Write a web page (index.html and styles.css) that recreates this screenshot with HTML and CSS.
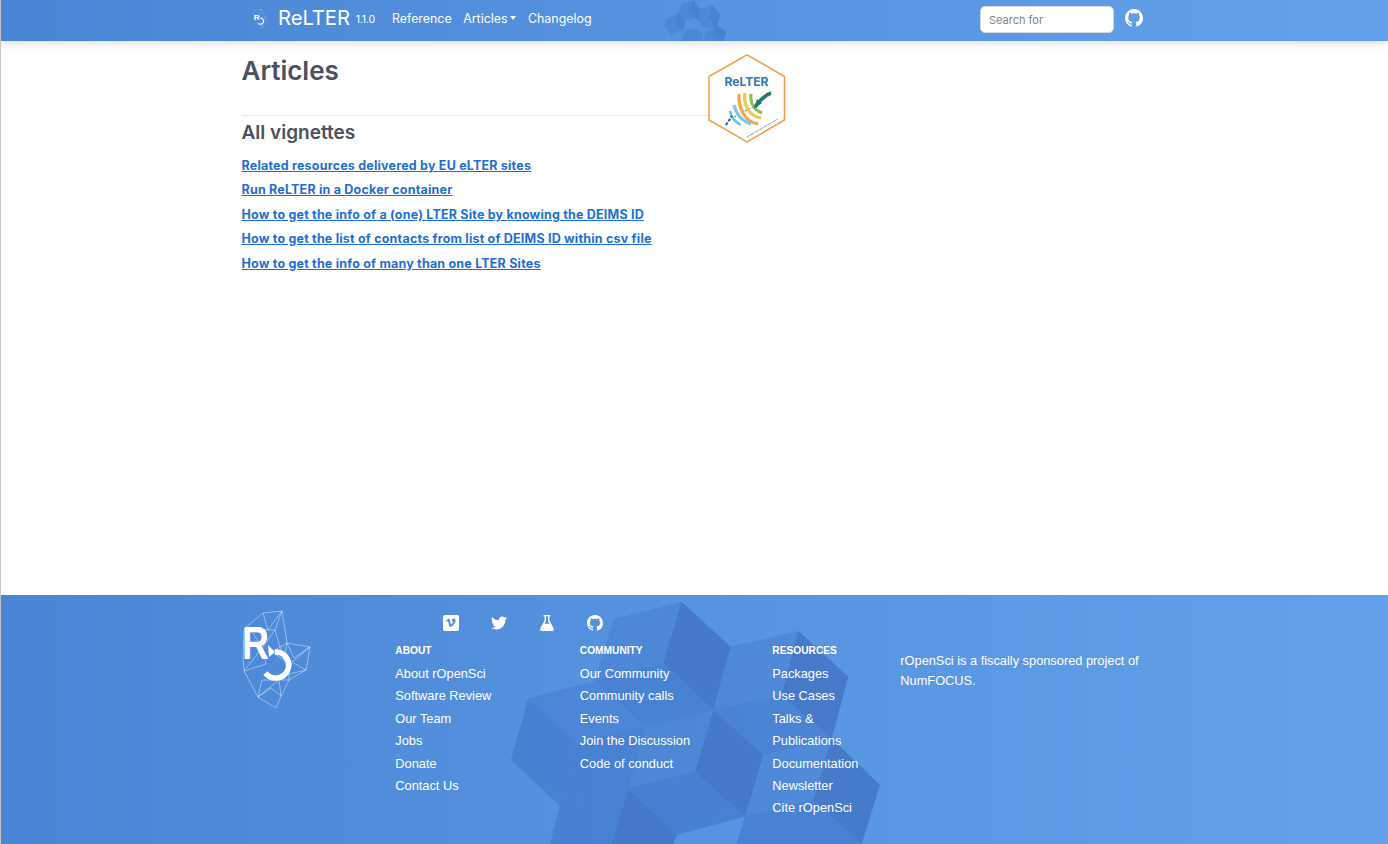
FILE: index.html
```html
<!DOCTYPE html>
<html lang="en">
<head>
<meta charset="utf-8">
<title>Articles • ReLTER</title>
<link rel="stylesheet" href="styles.css">
</head>
<body>
<header class="navbar">
  <svg class="nav-cubes" viewBox="0 0 240 126" aria-hidden="true">
    <polygon class="c1" points="80,12 115,0 135,28 125,55 90,62 70,40"/>
    <polygon class="c2" points="115,0 135,28 125,55 100,35"/>
    <polygon class="c1" points="30,60 70,40 90,62 85,90 50,105 30,80"/>
    <polygon class="c2" points="70,40 90,62 85,90 62,72"/>
    <polygon class="c1" points="130,28 170,15 197,45 185,80 145,85 125,55"/>
    <polygon class="c2" points="170,15 197,45 185,80 160,55"/>
    <polygon class="c1" points="78,126 90,92 125,85 145,105 140,126"/>
    <polygon class="c1" points="145,126 152,92 185,75 213,95 205,126"/>
    <polygon class="c2" points="185,75 213,95 205,126 178,105"/>
  </svg>
  <div class="nav-inner">
    <a class="nav-logo" href="#">
      <svg viewBox="0 0 20 24" class="nav-logo-svg" aria-hidden="true">
        <g class="wire-small"><polyline points="3,3 11,1 16,9 18,15 12,22 7,18 4,12 3,3"/><polyline points="11,1 9,12 16,9 12,22"/></g>
        <text x="3" y="13" class="nav-logo-r">R</text>
        <path class="nav-logo-o" d="M10.500 11a3.400 3.400 0 1 1-2.400 5.800"/>
      </svg>
    </a>
    <a class="brand" href="#">ReLTER</a>
    <span class="version">1.1.0</span>
    <nav class="nav-links">
      <a href="#">Reference</a>
      <a href="#" class="dropdown">Articles<span class="caret"></span></a>
      <a href="#">Changelog</a>
    </nav>
    <div class="nav-right">
      <input class="search" type="text" placeholder="Search for">
      <a class="nav-gh" href="#">
        <svg viewBox="0 0 16 16" aria-hidden="true"><path class="white" d="M8 0C3.58 0 0 3.58 0 8c0 3.54 2.29 6.53 5.47 7.59.4.07.55-.17.55-.38 0-.19-.01-.82-.01-1.49-2.01.37-2.53-.49-2.69-.94-.09-.23-.48-.94-.82-1.13-.28-.15-.68-.52-.01-.53.63-.01 1.08.58 1.23.82.72 1.21 1.87.87 2.33.66.07-.52.28-.87.51-1.07-1.78-.2-3.64-.89-3.64-3.95 0-.87.31-1.59.82-2.15-.08-.2-.36-1.02.08-2.12 0 0 .67-.21 2.2.82.64-.18 1.32-.27 2-.27.68 0 1.36.09 2 .27 1.53-1.04 2.2-.82 2.2-.82.44 1.1.16 1.92.08 2.12.51.56.82 1.27.82 2.15 0 3.07-1.87 3.75-3.65 3.95.29.25.54.73.54 1.48 0 1.07-.01 1.93-.01 2.2 0 .21.15.46.55.38A8.013 8.013 0 0016 8c0-4.42-3.58-8-8-8z"/></svg>
      </a>
    </div>
  </div>
</header>

<main class="content">
  <svg class="hex" viewBox="0 0 80 90" role="img" aria-label="ReLTER hex logo">
    <polygon class="hex-shape" points="40,.8 77.500,22.500 77.500,66 40,88 2,66 2,22.500"/>
    <text x="39.500" y="31.500" class="hex-title">ReLTER</text>
    <g class="leaf">
      <path class="l-stem" d="M47 53 L36 58 L27 63"/>
      <path class="l-orange" d="M32 40 C31 54 38 68 51 70"/>
      <path class="l-yellow" d="M38 39 C36 51 42 62 54 64"/>
      <path class="l-lime" d="M44 40 C43 49 47 56 55 59"/>
      <path class="l-blue" d="M27 51 C29 60 35 67 44 70"/>
      <path class="l-sky" d="M23 57 C24 63 28 68 34 71"/>
      <path class="l-navy" d="M19 71 L25 62"/>
      <path class="l-green" d="M64 39 C58 41 53 46 48 53"/>
      <path class="l-tip" d="M50 45 L47 55 L55 49z"/>
    </g>
    <path class="hex-url" d="M40 83 L71 65"/>
  </svg>
  <div class="page-header"><h1>Articles</h1></div>
  <h2>All vignettes</h2>
  <ul class="articles">
    <li><a href="#">Related resources delivered by EU eLTER sites</a></li>
    <li><a href="#">Run ReLTER in a Docker container</a></li>
    <li><a href="#">How to get the info of a (one) LTER Site by knowing the DEIMS ID</a></li>
    <li><a href="#">How to get the list of contacts from list of DEIMS ID within csv file</a></li>
    <li><a href="#">How to get the info of many than one LTER Sites</a></li>
  </ul>
</main>

<footer class="footer">
  <svg class="foot-cubes" viewBox="0 0 1200 747" aria-hidden="true">
    <polygon class="c1" points="340,72 545,21 490,205 285,258"/>
    <polygon class="c3" points="545,21 692,155 640,345 490,205"/>
    <polygon class="c2" points="285,258 490,205 640,345 435,395"/>
    <polygon class="c1" points="85,310 285,258 435,395 230,445"/>
    <polygon class="c2" points="33,495 85,310 230,445 180,632"/>
    <polygon class="c2" points="230,445 435,395 385,580 180,632"/>
    <polygon class="c1" points="692,155 895,108 845,300 640,345"/>
    <polygon class="c3" points="895,108 1045,245 995,430 845,300"/>
    <polygon class="c2" points="640,345 845,300 995,430 790,480"/>
    <polygon class="c1" points="435,395 640,345 585,530 385,580"/>
    <polygon class="c3" points="640,345 790,480 735,665 585,530"/>
    <polygon class="c4" points="385,580 585,530 735,665 530,720"/>
    <polygon class="c2" points="180,632 385,580 335,747 150,747"/>
    <polygon class="c3" points="385,580 530,720 520,747 335,747"/>
    <polygon class="c1" points="790,480 995,430 940,615 735,665"/>
    <polygon class="c3" points="995,430 1140,570 1085,747 940,615"/>
    <polygon class="c4" points="735,665 940,615 1085,747 710,747"/>
  </svg>
  <div class="foot-inner">
    <div class="foot-logo">
      <svg viewBox="0 0 72 100" aria-hidden="true">
        <g class="wire">
          <polygon points="40,1 21,3 2,19 1,48 2,61 16,87 34,98 39,86 47,70 64,60 68,37 45,33"/>
          <polyline points="21,3 26,20 40,1 33,20 26,20 8,18 2,19"/>
          <polyline points="33,20 20,38 2,61 24,54 20,38 8,18"/>
          <polyline points="33,20 42,50 45,33 52,48 68,37 50,52 64,60 47,64 47,70 37,70 16,87 29,78 39,86 37,70 20,70 16,87"/>
          <polyline points="45,33 30,42 42,50 47,64"/>
        </g>
        <text x="0" y="49" class="foot-r" textLength="27" lengthAdjust="spacingAndGlyphs">R</text>
        <path class="foot-o" d="M33 42a13 13 0 1 1-9.500 21"/>
        <path class="foot-o-tip" d="M26 35l7 7-6 5z"/>
      </svg>
    </div>
    <div class="foot-main">
      <div class="socials">
        <a href="#"><svg viewBox="0 0 16 16" aria-hidden="true"><rect class="white" width="16" height="16" rx="2"/><path class="cut" d="M3.200 6l.6.8c.7-.5 1-.6 1.200-.3.5 1 .9 3.200 1.400 4.400.4.9 1 1.400 1.600 1.100 1.500-.7 3.900-3.500 4.500-5.700.3-1.300 0-3-1.700-2.700-1 .2-1.900 1.100-2.200 2.600.8-.4 1.500-.3 1.300.7-.2.9-1.300 2.600-1.700 2.600-.5 0-.9-2.300-1.300-4-.3-1.300-.8-1.900-1.600-1.700C4.500 3.900 3.900 5.300 3.200 6z"/></svg></a>
        <a href="#"><svg viewBox="0 0 24 24" aria-hidden="true"><path class="white" d="M23.953 4.57a10 10 0 01-2.825.775 4.958 4.958 0 002.163-2.723c-.951.555-2.005.959-3.127 1.184a4.92 4.92 0 00-8.384 4.482C7.69 8.095 4.067 6.13 1.64 3.162a4.822 4.822 0 00-.666 2.475c0 1.71.87 3.213 2.188 4.096a4.904 4.904 0 01-2.228-.616v.06a4.923 4.923 0 003.946 4.827 4.996 4.996 0 01-2.212.085 4.936 4.936 0 004.604 3.417 9.867 9.867 0 01-6.102 2.105c-.39 0-.779-.023-1.17-.067a13.995 13.995 0 007.557 2.209c9.053 0 13.998-7.496 13.998-13.985 0-.21 0-.42-.015-.63A9.935 9.935 0 0024 4.59z"/></svg></a>
        <a href="#"><svg viewBox="0 0 16 16" aria-hidden="true"><path class="white" d="M4.600 0h6.800v1.300h-1v4.200l4.300 7.900c.6 1.200-.1 2.600-1.500 2.600H2.800c-1.400 0-2.100-1.400-1.500-2.600l4.300-7.900V1.300h-1z"/><path class="cut" d="M7 1.300h2v4.600l1.500 2.900h-5L7 5.900z"/></svg></a>
        <a href="#"><svg viewBox="0 0 16 16" aria-hidden="true"><path class="white" d="M8 0C3.58 0 0 3.58 0 8c0 3.54 2.29 6.53 5.47 7.59.4.07.55-.17.55-.38 0-.19-.01-.82-.01-1.49-2.01.37-2.53-.49-2.69-.94-.09-.23-.48-.94-.82-1.13-.28-.15-.68-.52-.01-.53.63-.01 1.08.58 1.23.82.72 1.21 1.87.87 2.33.66.07-.52.28-.87.51-1.07-1.78-.2-3.64-.89-3.64-3.95 0-.87.31-1.59.82-2.15-.08-.2-.36-1.02.08-2.12 0 0 .67-.21 2.2.82.64-.18 1.32-.27 2-.27.68 0 1.36.09 2 .27 1.53-1.04 2.2-.82 2.2-.82.44 1.1.16 1.92.08 2.12.51.56.82 1.27.82 2.15 0 3.07-1.87 3.75-3.65 3.95.29.25.54.73.54 1.48 0 1.07-.01 1.93-.01 2.2 0 .21.15.46.55.38A8.013 8.013 0 0016 8c0-4.42-3.58-8-8-8z"/></svg></a>
      </div>
      <div class="foot-cols">
        <div class="foot-col col-about">
          <h3>ABOUT</h3>
          <a href="#">About rOpenSci</a>
          <a href="#">Software Review</a>
          <a href="#">Our Team</a>
          <a href="#">Jobs</a>
          <a href="#">Donate</a>
          <a href="#">Contact Us</a>
        </div>
        <div class="foot-col col-community">
          <h3>COMMUNITY</h3>
          <a href="#">Our Community</a>
          <a href="#">Community calls</a>
          <a href="#">Events</a>
          <a href="#">Join the Discussion</a>
          <a href="#">Code of conduct</a>
        </div>
        <div class="foot-col col-resources">
          <h3>RESOURCES</h3>
          <a href="#">Packages</a>
          <a href="#">Use Cases</a>
          <a href="#">Talks &amp;<br>Publications</a>
          <a href="#">Documentation</a>
          <a href="#">Newsletter</a>
          <a href="#">Cite rOpenSci</a>
        </div>
      </div>
    </div>
    <p class="foot-note">rOpenSci is a fiscally sponsored project of NumFOCUS.</p>
  </div>
</footer>
</body>
</html>
```

FILE: styles.css
```css
* { box-sizing: border-box; }
html, body { margin: 0; height: 100%; }
body {
  display: flex;
  flex-direction: column;
  height: 844px;
  overflow: hidden;
  border-left: 1px solid #c4c6cc;
  background: #fff;
  font-family: "Inter", "Liberation Sans", sans-serif;
  color: #4a5160;
}
a { text-decoration: none; color: inherit; }
.white { fill: #fff; }
.cut { fill: #4f8cd9; }

/* navbar */
.navbar {
  position: relative;
  flex: none;
  height: 41px;
  background: linear-gradient(90deg, #4a85d5 0%, #63a1ea 100%);
  box-shadow: 0 2px 8px rgba(0, 0, 0, .14);
  overflow: hidden;
  z-index: 2;
}
.nav-cubes { position: absolute; left: 654px; top: 0; width: 80px; height: 42px; }
.nav-cubes .c1 { fill: rgba(60, 115, 200, .35); }
.nav-cubes .c2 { fill: rgba(60, 115, 200, .3); }
.nav-inner {
  position: relative;
  display: flex;
  align-items: center;
  height: 37px;
  padding-left: 250px;
  color: #fff;
}
.nav-logo { width: 27px; height: 24px; flex: none; }
.nav-logo-svg { width: 18px; height: 24px; display: block; }
.wire-small polyline { fill: none; stroke: rgba(255, 255, 255, .3); stroke-width: .5; }
.nav-logo-r { font: 700 9px "Liberation Sans", sans-serif; fill: #fff; }
.nav-logo-o { fill: none; stroke: #fff; stroke-width: 1.300; }
.brand { font-size: 20.300px; line-height: 1; letter-spacing: -.1px; }
.version { font-size: 10.500px; margin-left: 6px; margin-top: 1px; letter-spacing: -.2px; }
.nav-links { display: flex; gap: 11.500px; margin-left: 17px; font-size: 12.400px; }
.caret {
  display: inline-block;
  margin-left: 3px;
  vertical-align: 3px;
  border-top: 4px solid #fff;
  border-left: 3.500px solid transparent;
  border-right: 3.500px solid transparent;
}
.nav-right { display: flex; align-items: center; gap: 11px; margin-left: auto; margin-right: 245px; margin-top: 2px; }
.search {
  width: 134px;
  height: 27px;
  padding: 0 8px;
  border: 1px solid #d6dae2;
  border-radius: 5px;
  background: #fff;
  font: 11px "Inter", sans-serif;
}
.search::placeholder { color: #7d838f; opacity: 1; }
.nav-gh { display: block; width: 18px; height: 18px; margin-top: -4px; }
.nav-gh svg { display: block; width: 18px; height: 18px; }

/* content */
.content { position: relative; flex: 1; padding: 0 0 0 240.500px; }
.page-header { width: 470px; height: 75px; border-bottom: 1px solid #e6e8ec; }
h1 { margin: 0; padding-top: 12px; font-size: 26px; line-height: 35px; font-weight: 600; color: #4a5160; }
h2 { margin: 4px 0 0; font-size: 19px; line-height: 26px; font-weight: 600; color: #4a5160; }
.articles { list-style: none; margin: 7.700px 0 0; padding: 0; }
.articles li { height: 24.500px; line-height: 24.500px; font-size: 12.500px; font-weight: 700; letter-spacing: .2px; }
.articles a { color: #1d6fd6; text-decoration: underline; }

/* logo */
.hex { position: absolute; left: 706px; top: 13px; width: 80px; height: 90px; }
.hex-shape { fill: #fff; stroke: #ef9f48; stroke-width: 1.500; }
.hex-title { font: 700 12px "Inter", sans-serif; fill: #2f7ab0; text-anchor: middle; }
.leaf path { fill: none; stroke-width: 3.200; }
.leaf .l-green { stroke: #1f7a6b; stroke-width: 3.500; }
.leaf .l-tip { fill: #1f7a6b; stroke: none; }
.leaf .l-stem { stroke: #1f6a7a; stroke-width: 1; stroke-dasharray: 2 2; }
.leaf .l-orange { stroke: #f0a64a; }
.leaf .l-yellow { stroke: #f2c64c; }
.leaf .l-lime { stroke: #8fc04a; }
.leaf .l-blue { stroke: #7cc6e6; }
.leaf .l-sky { stroke: #6cc0e5; stroke-width: 2.500; }
.leaf .l-navy { stroke: #1d5a9a; stroke-width: 2.200; stroke-dasharray: 3 1.500; }
.hex-url { stroke: #777; stroke-width: 1; fill: none; stroke-dasharray: 1 .5; }

/* footer */
.footer {
  position: relative;
  flex: none;
  height: 249px;
  background: linear-gradient(90deg, #4a85d5 0%, #63a1ea 100%);
  overflow: hidden;
  color: #fff;
  font-family: "Liberation Sans", Arial, sans-serif;
}
.foot-cubes { position: absolute; left: 499px; top: 0; width: 400px; height: 249px; }
.foot-cubes .c1 { fill: rgba(58, 110, 195, .3); }
.foot-cubes .c2 { fill: rgba(58, 110, 195, .45); }
.foot-cubes .c3 { fill: rgba(58, 105, 185, .6); }
.foot-cubes .c4 { fill: rgba(58, 110, 200, .5); }
.foot-inner { position: relative; display: flex; padding: 15px 0 0 241px; }
.foot-logo { flex: none; width: 153.300px; }
.foot-logo svg { display: block; width: 72px; height: 100px; }
.wire polygon, .wire polyline { fill: none; stroke: rgba(255, 255, 255, .6); stroke-width: .7; }
.foot-r { font: 700 47px "Liberation Sans", sans-serif; fill: #fff; }
.foot-o { fill: none; stroke: #fff; stroke-width: 5.500; }
.foot-o-tip { fill: #fff; }
.foot-main { flex: none; width: 505px; }
.socials { display: flex; gap: 32px; padding-left: 48px; height: 31px; }
.socials a { display: block; width: 16px; height: 16px; margin-top: 5px; }
.socials svg { display: block; width: 16px; height: 16px; }
.foot-cols { display: flex; }
.foot-col { display: flex; flex-direction: column; }
.foot-col h3 { margin: 0 0 3px; height: 19px; line-height: 19px; font-size: 10.200px; font-weight: 700; }
.foot-col a { font-size: 12.800px; line-height: 22.400px; }
.col-about { width: 184.500px; }
.col-community { width: 192.500px; }
.col-resources { width: 128px; }
.foot-note { flex: none; width: 245px; margin: 41px 0 0; font-size: 12.800px; line-height: 20px; }
```
